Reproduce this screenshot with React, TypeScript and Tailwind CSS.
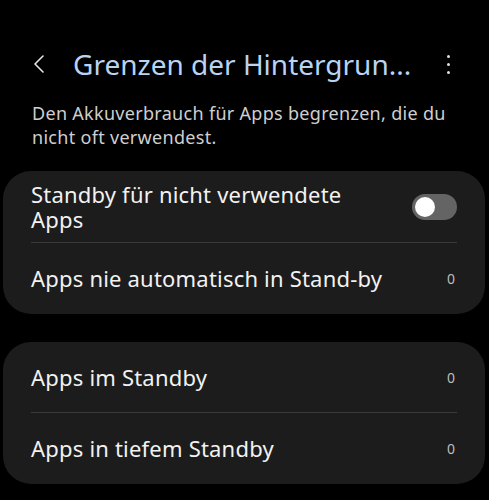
import { ChevronLeft } from 'lucide-react';

const font = { fontFamily: '"Noto Sans", "DejaVu Sans", sans-serif' };

function Toggle() {
  return (
    <div className="w-[45px] h-[26px] rounded-full bg-[#646464] flex items-center px-[3px] shrink-0">
      <div className="w-[20px] h-[20px] rounded-full bg-white" />
    </div>
  );
}

function Row({ label, value, divider }: { label: string; value?: string; divider?: boolean }) {
  return (
    <div className={`flex items-center justify-between h-[71px] ${divider ? 'border-b border-[#3a3a3a]' : ''}`}>
      <span className="text-[22px] leading-[25px] tracking-[0.2px] text-[#f2f2f2]">{label}</span>
      {value && <span className="text-[14px] text-[#bdbdbd] pr-[2px]">{value}</span>}
    </div>
  );
}

export default function App() {
  return (
    <div className="w-[489px] h-[500px] bg-black overflow-hidden" style={font}>
      <div className="flex items-center h-[50px] mt-[39px] pl-[23px] pr-[39px]">
        <ChevronLeft className="w-[32px] h-[32px] text-[#e6e6e6] shrink-0" strokeWidth={1.2} />
        <div className="ml-[18px] flex-1 text-[28px] text-[#b9d3f3] truncate">Grenzen der Hintergrun...</div>
        <div className="flex flex-col gap-[5px] items-center ml-[10px] w-[4px]">
          <div className="w-[3px] h-[3px] rounded-full bg-[#e0e0e0]" />
          <div className="w-[3px] h-[3px] rounded-full bg-[#e0e0e0]" />
          <div className="w-[3px] h-[3px] rounded-full bg-[#e0e0e0]" />
        </div>
      </div>

      <p className="mt-[12px] pl-[32px] pr-[36px] text-[18px] leading-[24px] tracking-[0.3px] text-[#cfcfcf]">
        Den Akkuverbrauch für Apps begrenzen, die du nicht oft verwendest.
      </p>

      <div className="mt-[22px] ml-[3px] mr-[4px] rounded-[28px] bg-[#1c1c1c] px-[28px]">
        <div className="flex items-center justify-between h-[72px] border-b border-[#3a3a3a]">
          <span className="text-[22px] leading-[25px] tracking-[0.2px] text-[#f2f2f2] w-[330px]">
            Standby für nicht verwendete Apps
          </span>
          <Toggle />
        </div>
        <Row label="Apps nie automatisch in Stand-by" value="0" />
      </div>

      <div className="mt-[28px] ml-[3px] mr-[4px] rounded-[28px] bg-[#1c1c1c] px-[28px]">
        <Row label="Apps im Standby" value="0" divider />
        <Row label="Apps in tiefem Standby" value="0" />
      </div>
    </div>
  );
}
